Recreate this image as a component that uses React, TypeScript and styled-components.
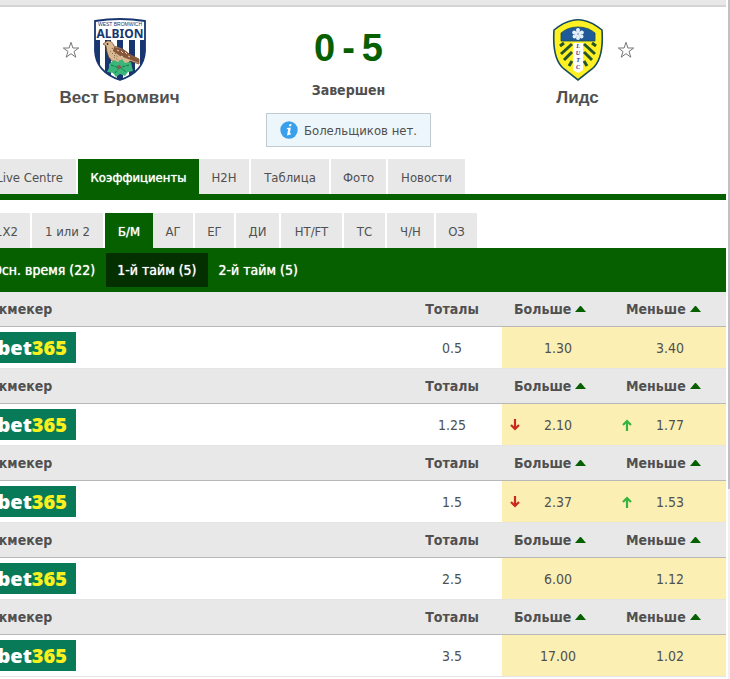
import React from "react";
import styled, { createGlobalStyle, css } from "styled-components";

const GREEN = "#066000";

const GlobalStyle = createGlobalStyle`
  * { box-sizing: border-box; }
  body {
    margin: 0;
    background: #fff;
    color: #505050;
    font-family: "DejaVu Sans Condensed", Tahoma, "DejaVu Sans", sans-serif;
    font-size: 13px;
    overflow: hidden;
  }
  button { font: inherit; color: inherit; border: 0; padding: 0; background: none; cursor: pointer; }
`;

const Page = styled.div`
  display: flex;
  gap: 2px;
  min-height: 100vh;
  overflow: hidden;
`;

const Main = styled.main`
  flex: 1;
  min-width: 0;
  margin-left: -29px;
`;

const ScrollTrack = styled.div`
  width: 2px;
  background: #f0f0f0;
`;

const ScrollThumb = styled.div`
  height: 72%;
  background: #c0c0c6;
`;

const TopStrip = styled.div`
  height: 7px;
  background: #e8e8e8;
  border-bottom: 2px solid #d4d4d4;
`;

const Match = styled.header`
  display: grid;
  grid-template-columns: repeat(3, 229px);
  justify-content: center;
  height: 152px;
  padding-top: 11px;
`;

const Team = styled.section`
  display: flex;
  flex-direction: column;
  align-items: center;
  gap: 6px;
`;

const Emblem = styled.div<{ $mirrored?: boolean }>`
  display: flex;
  flex-direction: ${(p) => (p.$mirrored ? "row-reverse" : "row")};
  align-items: center;
  gap: 13px;
  height: 64px;
  &::after { content: ""; width: 18px; }
`;

const StarButton = styled.button`
  display: flex;
  width: 18px;
`;

const TeamName = styled.h2`
  margin: 0;
  font: bold 17px/20px "Liberation Sans", Arial, sans-serif;
`;

const Result = styled.section`
  display: flex;
  flex-direction: column;
  align-items: center;
`;

const Score = styled.div`
  display: flex;
  gap: 7px;
  padding-top: 8px;
  color: ${GREEN};
  font: bold 38px/44px "Liberation Sans", Arial, sans-serif;
`;

const Status = styled.div`
  margin-top: 11px;
  font-size: 14px;
  font-weight: bold;
  line-height: 18px;
`;

const Notice = styled.div`
  display: flex;
  align-items: center;
  gap: 6px;
  height: 34px;
  margin-top: 14px;
  padding: 0 13px;
  border: 1px solid #c0ccd2;
  background: #edf6fb;
  white-space: nowrap;
`;

const TabBar = styled.nav<{ $thick?: boolean }>`
  display: flex;
  padding-left: 12px;
  border-bottom: ${(p) => (p.$thick ? 6 : 0)}px solid ${GREEN};
  margin-bottom: ${(p) => (p.$thick ? 13 : 0)}px;
`;

const Tab = styled.button<{ $width: number; $active?: boolean }>`
  width: ${(p) => p.$width}px;
  height: 35px;
  padding-top: 2px;
  background: #e8e8e8;
  background-clip: padding-box;
  border-right: 2px solid transparent;
  white-space: nowrap;
  ${(p) =>
    p.$active &&
    css`
      background: ${GREEN};
      border-right: 0;
      color: #fff;
      text-shadow: 0 0 1px #fff;
    `}
`;

const Periods = styled.nav`
  display: flex;
  align-items: center;
  height: 44px;
  padding-left: 10px;
  background: ${GREEN};
  font-size: 14px;
`;

const Period = styled.button<{ $active?: boolean }>`
  height: 34px;
  padding: 0 11px;
  color: #fff;
  text-shadow: 0 0 1px #fff;
  background: ${(p) => (p.$active ? "#043000" : "transparent")};
`;

const Odds = styled.table`
  width: 100%;
  table-layout: fixed;
  border-collapse: separate;
  border-spacing: 0;
  font-size: 14px;
  td, th { padding: 0; }
`;

const HeadCell = styled.th<{ $align?: string }>`
  height: 35px;
  background: #e8e8e8;
  border-bottom: 1px solid #b8b8b8;
  text-align: ${(p) => p.$align ?? "center"};
  && { padding-left: ${(p) => (p.$align ? 12 : 0)}px; }
  &&:first-child { padding-left: 10px; }
`;

const SortButton = styled.button`
  display: inline-flex;
  align-items: center;
  gap: 4px;
  font-weight: bold;
`;

const Cell = styled.td<{ $odd?: boolean }>`
  height: 42px;
  text-align: center;
  border-bottom: 1px solid #e4e4e4;
  background: ${(p) => (p.$odd ? "#fcefb4" : "#fff")};
`;

const OddValue = styled.div`
  display: grid;
  grid-template-columns: 10px 1fr 10px;
  align-items: center;
  padding: 0 8px;
`;

const Value = styled.span`
  grid-column: 2;
  grid-row: 1;
`;

const BookmakerLogo = styled.a`
  display: flex;
  align-items: center;
  justify-content: flex-end;
  width: 105px;
  height: 31px;
  padding-right: 9px;
  background: #087a58;
  color: #fff;
  font: 900 20px/30px "Noto Sans", "Open Sans", sans-serif;
  text-decoration: none;
`;

const LogoNumber = styled.span`
  color: #fbf01d;
`;

const Star = () => (
  <svg width="18" height="18" viewBox="0 0 18 18" fill="#fff" stroke="#777" strokeWidth="1">
    <path d="M9 1.3 10.9 7H16.7L12 10.5 13.8 16.2 9 12.7 4.2 16.2 6 10.5 1.3 7H7.1Z" />
  </svg>
);

const AlbionCrest = () => (
  <svg width="54" height="64" viewBox="0 0 54 64" role="img" aria-label="West Bromwich Albion">
    <defs>
      <clipPath id="albion">
        <path d="M2 3Q27-1 52 3V33Q51 54 27 62Q3 54 2 33Z" />
      </clipPath>
    </defs>
    <g clipPath="url(#albion)">
      <path fill="#fff" d="M0 0h54v64H0z" />
      <path
        fill="#18366f"
        d="M0 22h7v42H0zM12 22h6v42h-6zM24 22h6v42h-6zM36 22h6v42h-6zM47 22h7v42h-7z"
      />
    </g>
    <text x="27" y="8" textAnchor="middle" fontFamily="Liberation Sans" fontSize="5" fill="#18366f">
      WEST BROMWICH
    </text>
    <text x="27" y="20" textAnchor="middle" fontFamily="Noto Sans" fontWeight="bold" fontSize="12" fill="#18366f">
      ALBION
    </text>
    <path fill="#d9b991" stroke="#6b4127" strokeWidth=".7" d="m10 26 4-3q5-1 7 5 8 1 15 8l10 5v5l-9-3q-3 4-9 3-12-1-14-12l-1-6z" />
    <path fill="#85583d" d="m21 29 9 2 8 6 8 4v4l-11-4-8-3-7-5z" />
    <path stroke="#edcfaa" strokeWidth="1" fill="none" d="m24 32 2 1m2 0 2 2m2-1 2 2m-6 2 2 1m5-1 2 1" />
    <circle cx="14.5" cy="26" r=".9" fill="#392519" />
    <path stroke="#755236" strokeWidth="1" strokeDasharray="1 2" d="m17 33 6 6m-4-9 6 10m-4-1 7 5" />
    <path
      fill="#3bb67b"
      d="m16 46 5-4 4 2 4-3 3 4 6-1 1 5 1 4-5 1-3 4-5-2-4 3-3-4-6-1 2-4z"
    />
    <path stroke="#127548" strokeWidth="1" strokeDasharray="3 1" fill="none" d="m18 47 8 3 10-3M22 55l5-6 6 5" />
    <circle cx="26" cy="49" r="2" fill="#895d4d" />
    <path d="M2 3Q27-1 52 3V33Q51 54 27 62Q3 54 2 33Z" fill="none" stroke="#18366f" strokeWidth="1.8" />
  </svg>
);

const LeedsCrest = () => (
  <svg width="52" height="64" viewBox="0 0 52 64" role="img" aria-label="Leeds United">
    <path fill="#fff023" stroke="#164c5b" strokeWidth="1.6" d="M2 12Q12 4 20 2.500Q26 1 32 2.500Q40 4 50 12Q52 41 40 51L26 62 12 51Q0 41 2 12Z" />
    <path fill="#205a98" stroke="#164c5b" strokeWidth=".8" d="M9 23V15Q16 9 26 9T43 15V23Z" />
    <g fill="#e4f0f8">
      <circle cx="26" cy="16" r="3" />
      <circle cx="26" cy="12" r="2" />
      <circle cx="22.200" cy="14.500" r="2" />
      <circle cx="29.800" cy="14.500" r="2" />
      <circle cx="22.500" cy="18.500" r="2" />
      <circle cx="29.500" cy="18.500" r="2" />
      <circle cx="26" cy="20" r="2" />
    </g>
    <circle cx="26" cy="16" r="1.2" fill="#9cc0d8" />
    <path fill="#fff" d="M21 25h10v27l-5 3-5-3z" />
    <g stroke="#24552d" strokeWidth="3">
      <path d="m8 28 4-3M9 36 20 26M12 42l8-8M17 48l3-5M44 28l-4-3M43 36 32 26M40 42l-8-8M35 48l-3-5" />
    </g>
    <g fontFamily="Liberation Serif" fontStyle="italic" fontWeight="bold" fontSize="6" fill="#273b73" textAnchor="middle">
      <text x="26" y="30">L</text>
      <text x="26" y="37">U</text>
      <text x="26" y="44">T</text>
      <text x="26" y="51">C</text>
    </g>
  </svg>
);

const InfoIcon = () => (
  <svg width="18" height="18" viewBox="0 0 18 18">
    <circle cx="9" cy="9" r="8.7" fill="#3ba0ec" />
    <path fill="#fff" d="m9.4 3.2 2.200-.2-.5 2.100-2.100.1zM7 7l3.900-.6-1.200 6 1.300-.3-.3 1.300-3.700 1 1.200-6.300-1.500.2z" />
  </svg>
);

const SortIcon = () => (
  <svg width="11" height="6" viewBox="0 0 11 6">
    <path fill={GREEN} d="M0 6 5 0h1l5 6z" />
  </svg>
);

const TrendIcon = ({ up }: { up: boolean }) => (
  <svg width="10" height="12" viewBox="0 0 10 12" role="img" aria-label={up ? "▲" : "▼"}>
    <path
      d={up ? "M5 12V2M1 6l4-4 4 4" : "M5 0v10M1 6l4 4 4-4"}
      fill="none"
      stroke={up ? "#35b540" : "#c92a1b"}
      strokeWidth="2.2"
    />
  </svg>
);

const sections = [
  { label: "Live Centre", width: 95 },
  { label: "Коэффициенты", width: 121, active: true },
  { label: "H2H", width: 52 },
  { label: "Таблица", width: 80 },
  { label: "Фото", width: 57 },
  { label: "Новости", width: 79 },
];

const markets = [
  { label: "1X2", width: 49 },
  { label: "1 или 2", width: 73 },
  { label: "Б/М", width: 48, active: true },
  { label: "АГ", width: 42 },
  { label: "ЕГ", width: 41 },
  { label: "ДИ", width: 45 },
  { label: "HT/FT", width: 63 },
  { label: "ТС", width: 43 },
  { label: "Ч/Н", width: 49 },
  { label: "ОЗ", width: 43 },
];

const totals = [
  { total: "0.5", over: "1.30", under: "3.40" },
  { total: "1.25", over: "2.10", under: "1.77", moved: true },
  { total: "1.5", over: "2.37", under: "1.53", moved: true },
  { total: "2.5", over: "6.00", under: "1.12" },
  { total: "3.5", over: "17.00", under: "1.02" },
];

const SortHeader = ({ label }: { label: string }) => (
  <HeadCell $align="left">
    <SortButton>
      {label}
      <SortIcon />
    </SortButton>
  </HeadCell>
);

export default function App() {
  return (
    <Page>
      <GlobalStyle />
      <Main>
        <TopStrip />
        <Match>
          <Team>
            <Emblem>
              <StarButton aria-label="Вест Бромвич"><Star /></StarButton>
              <AlbionCrest />
            </Emblem>
            <TeamName>Вест Бромвич</TeamName>
          </Team>
          <Result>
            <Score><span>0</span><span>-</span><span>5</span></Score>
            <Status>Завершен</Status>
            <Notice><InfoIcon />Болельщиков нет.</Notice>
          </Result>
          <Team>
            <Emblem $mirrored>
              <StarButton aria-label="Лидс"><Star /></StarButton>
              <LeedsCrest />
            </Emblem>
            <TeamName>Лидс</TeamName>
          </Team>
        </Match>
        <TabBar $thick>
          {sections.map((t) => (
            <Tab key={t.label} $width={t.width} $active={t.active}>{t.label}</Tab>
          ))}
        </TabBar>
        <TabBar>
          {markets.map((t) => (
            <Tab key={t.label} $width={t.width} $active={t.active}>{t.label}</Tab>
          ))}
        </TabBar>
        <Periods>
          <Period>Осн. время (22)</Period>
          <Period $active>1-й тайм (5)</Period>
          <Period>2-й тайм (5)</Period>
        </Periods>
        <Odds>
          <colgroup>
            <col />
            <col width="100" />
            <col width="112" />
            <col width="112" />
          </colgroup>
          {totals.map((row) => (
            <tbody key={row.total}>
              <tr>
                <HeadCell $align="left">Букмекер</HeadCell>
                <HeadCell>Тоталы</HeadCell>
                <SortHeader label="Больше" />
                <SortHeader label="Меньше" />
              </tr>
              <tr>
                <Cell>
                  <BookmakerLogo href="#">bet<LogoNumber>365</LogoNumber></BookmakerLogo>
                </Cell>
                <Cell>{row.total}</Cell>
                <Cell $odd>
                  <OddValue>{row.moved && <TrendIcon up={false} />}<Value>{row.over}</Value></OddValue>
                </Cell>
                <Cell $odd>
                  <OddValue>{row.moved && <TrendIcon up />}<Value>{row.under}</Value></OddValue>
                </Cell>
              </tr>
            </tbody>
          ))}
        </Odds>
      </Main>
      <ScrollTrack><ScrollThumb /></ScrollTrack>
    </Page>
  );
}
